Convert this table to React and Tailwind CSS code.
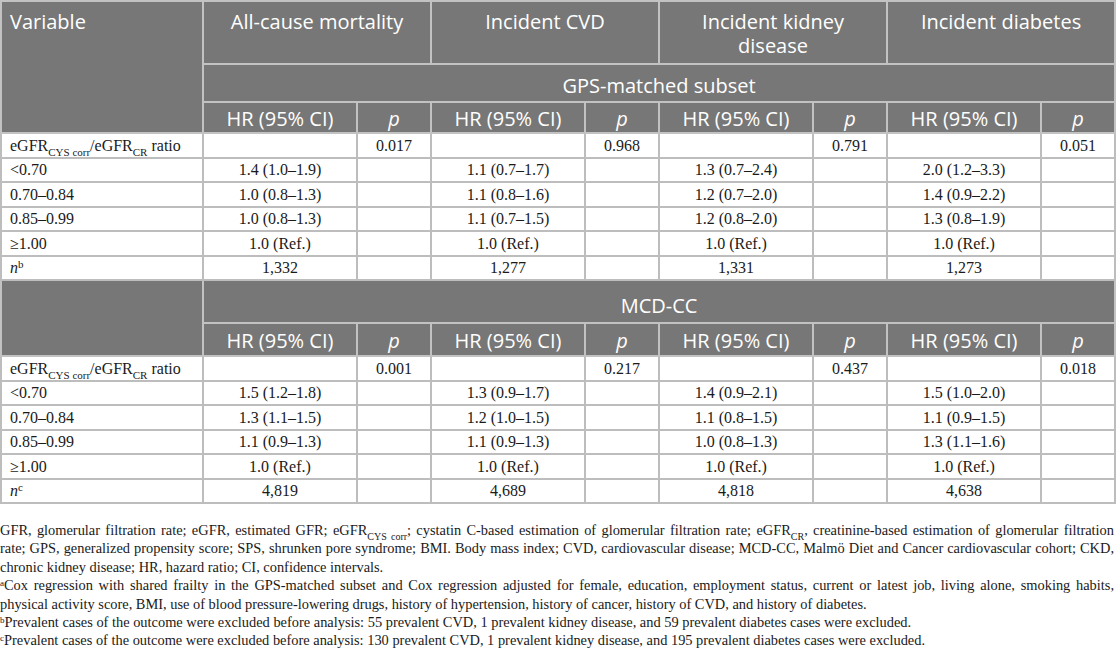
import React from "react";

const sans = "font-['Open_Sans',sans-serif]";
const serif = "font-['Liberation_Serif',serif]";

const groups = [
  {
    head: "GPS-matched subset",
    n: "b",
    p: ["0.017", "0.968", "0.791", "0.051"],
    rows: [
      ["<0.70", "1.4 (1.0–1.9)", "1.1 (0.7–1.7)", "1.3 (0.7–2.4)", "2.0 (1.2–3.3)"],
      ["0.70–0.84", "1.0 (0.8–1.3)", "1.1 (0.8–1.6)", "1.2 (0.7–2.0)", "1.4 (0.9–2.2)"],
      ["0.85–0.99", "1.0 (0.8–1.3)", "1.1 (0.7–1.5)", "1.2 (0.8–2.0)", "1.3 (0.8–1.9)"],
      ["≥1.00", "1.0 (Ref.)", "1.0 (Ref.)", "1.0 (Ref.)", "1.0 (Ref.)"],
    ],
    counts: ["1,332", "1,277", "1,331", "1,273"],
  },
  {
    head: "MCD-CC",
    n: "c",
    p: ["0.001", "0.217", "0.437", "0.018"],
    rows: [
      ["<0.70", "1.5 (1.2–1.8)", "1.3 (0.9–1.7)", "1.4 (0.9–2.1)", "1.5 (1.0–2.0)"],
      ["0.70–0.84", "1.3 (1.1–1.5)", "1.2 (1.0–1.5)", "1.1 (0.8–1.5)", "1.1 (0.9–1.5)"],
      ["0.85–0.99", "1.1 (0.9–1.3)", "1.1 (0.9–1.3)", "1.0 (0.8–1.3)", "1.3 (1.1–1.6)"],
      ["≥1.00", "1.0 (Ref.)", "1.0 (Ref.)", "1.0 (Ref.)", "1.0 (Ref.)"],
    ],
    counts: ["4,819", "4,689", "4,818", "4,638"],
  },
];

const hd = "border-2 border-[#c2c2c2] bg-[#777777] text-white font-normal";
const td = "border-2 border-[#bdbdbd] h-[24.5px] p-0 text-center";
const tdl = "border-2 border-[#bdbdbd] h-[24.5px] p-0 pl-2 text-left";

function Ratio() {
  return (
    <>
      eGFR<sub className="text-[11px] align-[-2px] leading-none">CYS corr</sub>/eGFR
      <sub className="text-[11px] align-[-2px] leading-none">CR</sub> ratio
    </>
  );
}

function SubHead({ h }) {
  return (
    <tr className={`${sans} text-[20px] leading-[24px] ${h}`}>
      {[0, 1, 2, 3].map((i) => (
        <React.Fragment key={i}>
          <th className={`${hd} pt-[3px] pb-0`}>HR (95% CI)</th>
          <th className={`${hd} pt-[3px] pb-0 italic`}>p</th>
        </React.Fragment>
      ))}
    </tr>
  );
}

function Body({ g }) {
  return (
    <>
      <tr>
        <td className={tdl}>
          <Ratio />
        </td>
        {g.p.map((v, i) => (
          <React.Fragment key={i}>
            <td className={td}></td>
            <td className={td}>{v}</td>
          </React.Fragment>
        ))}
      </tr>
      {g.rows.map((r) => (
        <tr key={r[0]}>
          <td className={tdl}>{r[0]}</td>
          {r.slice(1).map((v, i) => (
            <React.Fragment key={i}>
              <td className={td}>{v}</td>
              <td className={td}></td>
            </React.Fragment>
          ))}
        </tr>
      ))}
      <tr>
        <td className={tdl}>
          <i>n</i>
          <sup className="text-[11px] leading-none">{g.n}</sup>
        </td>
        {g.counts.map((v, i) => (
          <React.Fragment key={i}>
            <td className={td}>{v}</td>
            <td className={td}></td>
          </React.Fragment>
        ))}
      </tr>
    </>
  );
}

const just = "text-justify [text-align-last:justify]";

export default function App() {
  return (
    <div className="w-[1116px] bg-white text-[#1a1a1a]">
      <table className={`table-fixed border-collapse w-[1116px] ${serif} text-[16px] leading-[19px]`}>
        <colgroup>
          <col className="w-[202px]" />
          {[0, 1, 2, 3].map((i) => (
            <React.Fragment key={i}>
              <col className="w-[154px]" />
              <col className="w-[74px]" />
            </React.Fragment>
          ))}
        </colgroup>
        <thead>
          <tr className={`${sans} text-[20px] leading-[24px] h-[63px]`}>
            <th rowSpan={3} className={`${hd} align-top text-left pl-2 pt-2`}>
              Variable
            </th>
            <th colSpan={2} className={`${hd} align-top pt-2`}>All-cause mortality</th>
            <th colSpan={2} className={`${hd} align-top pt-2`}>Incident CVD</th>
            <th colSpan={2} className={`${hd} align-top pt-2`}>
              Incident kidney
              <br />
              disease
            </th>
            <th colSpan={2} className={`${hd} align-top pt-2`}>Incident diabetes</th>
          </tr>
          <tr className={`${sans} text-[20px] leading-[24px] h-[38px]`}>
            <th colSpan={8} className={`${hd} pt-[5px]`}>
              {groups[0].head}
            </th>
          </tr>
          <SubHead h="h-[31px]" />
        </thead>
        <tbody>
          <Body g={groups[0]} />
          <tr className={`${sans} text-[20px] leading-[24px] h-[43px]`}>
            <th rowSpan={2} className={hd}></th>
            <th colSpan={8} className={`${hd} pt-[8px]`}>
              {groups[1].head}
            </th>
          </tr>
          <SubHead h="h-[33px]" />
          <Body g={groups[1]} />
        </tbody>
      </table>

      <div className={`${serif} text-[14.4px] leading-[18.4px] mt-[17px] pr-[2px]`}>
        <div className={just}>
          GFR, glomerular filtration rate; eGFR, estimated GFR; eGFR
          <sub className="text-[10px] align-[-2px] leading-none">CYS corr</sub>; cystatin C-based estimation of glomerular
          filtration rate; eGFR<sub className="text-[10px] align-[-2px] leading-none">CR</sub>, creatinine-based estimation
          of glomerular filtration
        </div>
        <div className={just}>
          rate; GPS, generalized propensity score; SPS, shrunken pore syndrome; BMI. Body mass index; CVD, cardiovascular
          disease; MCD-CC, Malmö Diet and Cancer cardiovascular cohort; CKD,
        </div>
        <div>chronic kidney disease; HR, hazard ratio; CI, confidence intervals.</div>
        <div className={just}>
          <sup className="text-[9px] leading-none">a</sup>Cox regression with shared frailty in the GPS-matched subset and
          Cox regression adjusted for female, education, employment status, current or latest job, living alone, smoking
          habits,
        </div>
        <div>
          physical activity score, BMI, use of blood pressure-lowering drugs, history of hypertension, history of cancer,
          history of CVD, and history of diabetes.
        </div>
        <div>
          <sup className="text-[9px] leading-none">b</sup>Prevalent cases of the outcome were excluded before analysis: 55
          prevalent CVD, 1 prevalent kidney disease, and 59 prevalent diabetes cases were excluded.
        </div>
        <div>
          <sup className="text-[9px] leading-none">c</sup>Prevalent cases of the outcome were excluded before analysis: 130
          prevalent CVD, 1 prevalent kidney disease, and 195 prevalent diabetes cases were excluded.
        </div>
      </div>
    </div>
  );
}
